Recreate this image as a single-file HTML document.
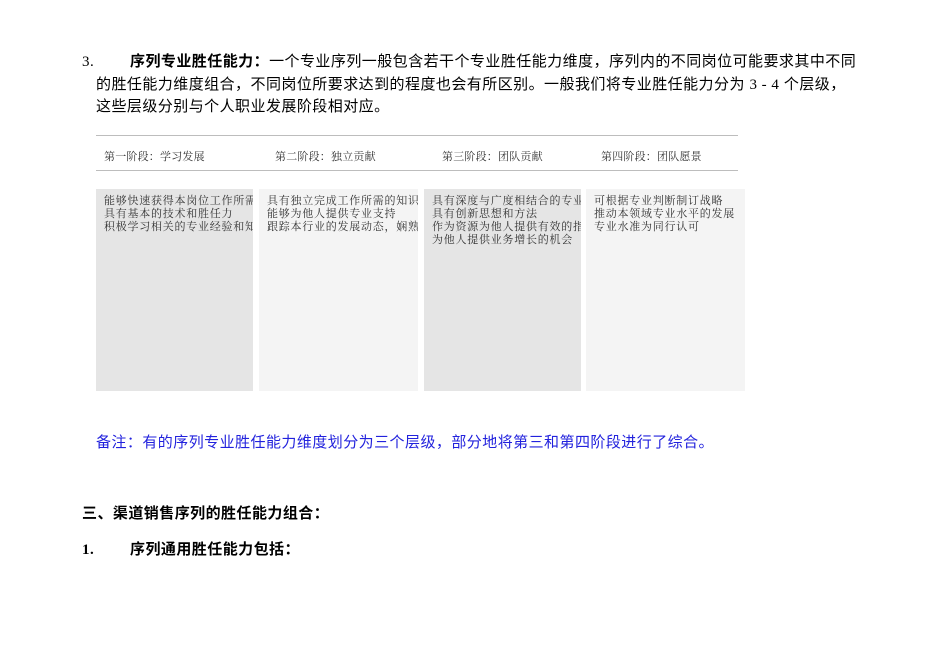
<!DOCTYPE html>
<html><head><meta charset="utf-8"><style>
body{margin:0;width:950px;height:672px;background:#fff;position:relative;font-family:"Liberation Sans","Noto Sans CJK SC",sans-serif;color:#000;overflow:hidden}
.t{position:absolute;font-size:15px;letter-spacing:0.45px;white-space:nowrap;line-height:22px}
.s{font-family:"Liberation Serif","Noto Serif CJK SC",serif}
.line{position:absolute;left:96px;width:642px;height:1px;background:#bdbdbd}
.h{position:absolute;top:148px;font-size:11px;letter-spacing:0.2px;font-family:"Liberation Serif","Noto Serif CJK SC",serif;color:#333;white-space:nowrap}
.box{position:absolute;top:189px;height:202px;overflow:hidden;font-family:"Liberation Serif","Noto Serif CJK SC",serif;font-size:11px;letter-spacing:0.75px;line-height:13px;color:#333;white-space:nowrap;padding:6px 0 0 8px;box-sizing:border-box}
.g{background:#e5e5e5}.l{background:#f4f4f4}
</style></head><body>
<div class="t" style="left:82px;top:51px"><span class="s">3.</span></div>
<div class="t" style="left:130px;top:51px"><b>序列专业胜任能力：</b>一个专业序列一般包含若干个专业胜任能力维度，序列内的不同岗位可能要求其中不同</div>
<div class="t" style="left:96px;top:74px">的胜任能力维度组合，不同岗位所要求达到的程度也会有所区别。一般我们将专业胜任能力分为 <span class="s">3 - 4</span> 个层级，</div>
<div class="t" style="left:96px;top:96px">这些层级分别与个人职业发展阶段相对应。</div>
<div class="line" style="top:135px"></div>
<div class="line" style="top:170px"></div>
<div class="h" style="left:104px">第一阶段：学习发展</div>
<div class="h" style="left:275px">第二阶段：独立贡献</div>
<div class="h" style="left:442px">第三阶段：团队贡献</div>
<div class="h" style="left:601px">第四阶段：团队愿景</div>
<div class="box g" style="left:96px;width:157px">能够快速获得本岗位工作所需的<br>具有基本的技术和胜任力<br>积极学习相关的专业经验和知识</div>
<div class="box l" style="left:259px;width:159px">具有独立完成工作所需的知识和<br>能够为他人提供专业支持<br>跟踪本行业的发展动态，娴熟掌</div>
<div class="box g" style="left:424px;width:157px">具有深度与广度相结合的专业知<br>具有创新思想和方法<br>作为资源为他人提供有效的指导<br>为他人提供业务增长的机会</div>
<div class="box l" style="left:586px;width:159px">可根据专业判断制订战略<br>推动本领域专业水平的发展<br>专业水准为同行认可</div>
<div class="t" style="left:96px;top:432px;color:#2222dd">备注：有的序列专业胜任能力维度划分为三个层级，部分地将第三和第四阶段进行了综合。</div>
<div class="t" style="left:82px;top:503px"><b>三、渠道销售序列的胜任能力组合：</b></div>
<div class="t" style="left:82px;top:539px"><b class="s">1.</b></div>
<div class="t" style="left:130px;top:539px"><b>序列通用胜任能力包括：</b></div>
</body></html>
